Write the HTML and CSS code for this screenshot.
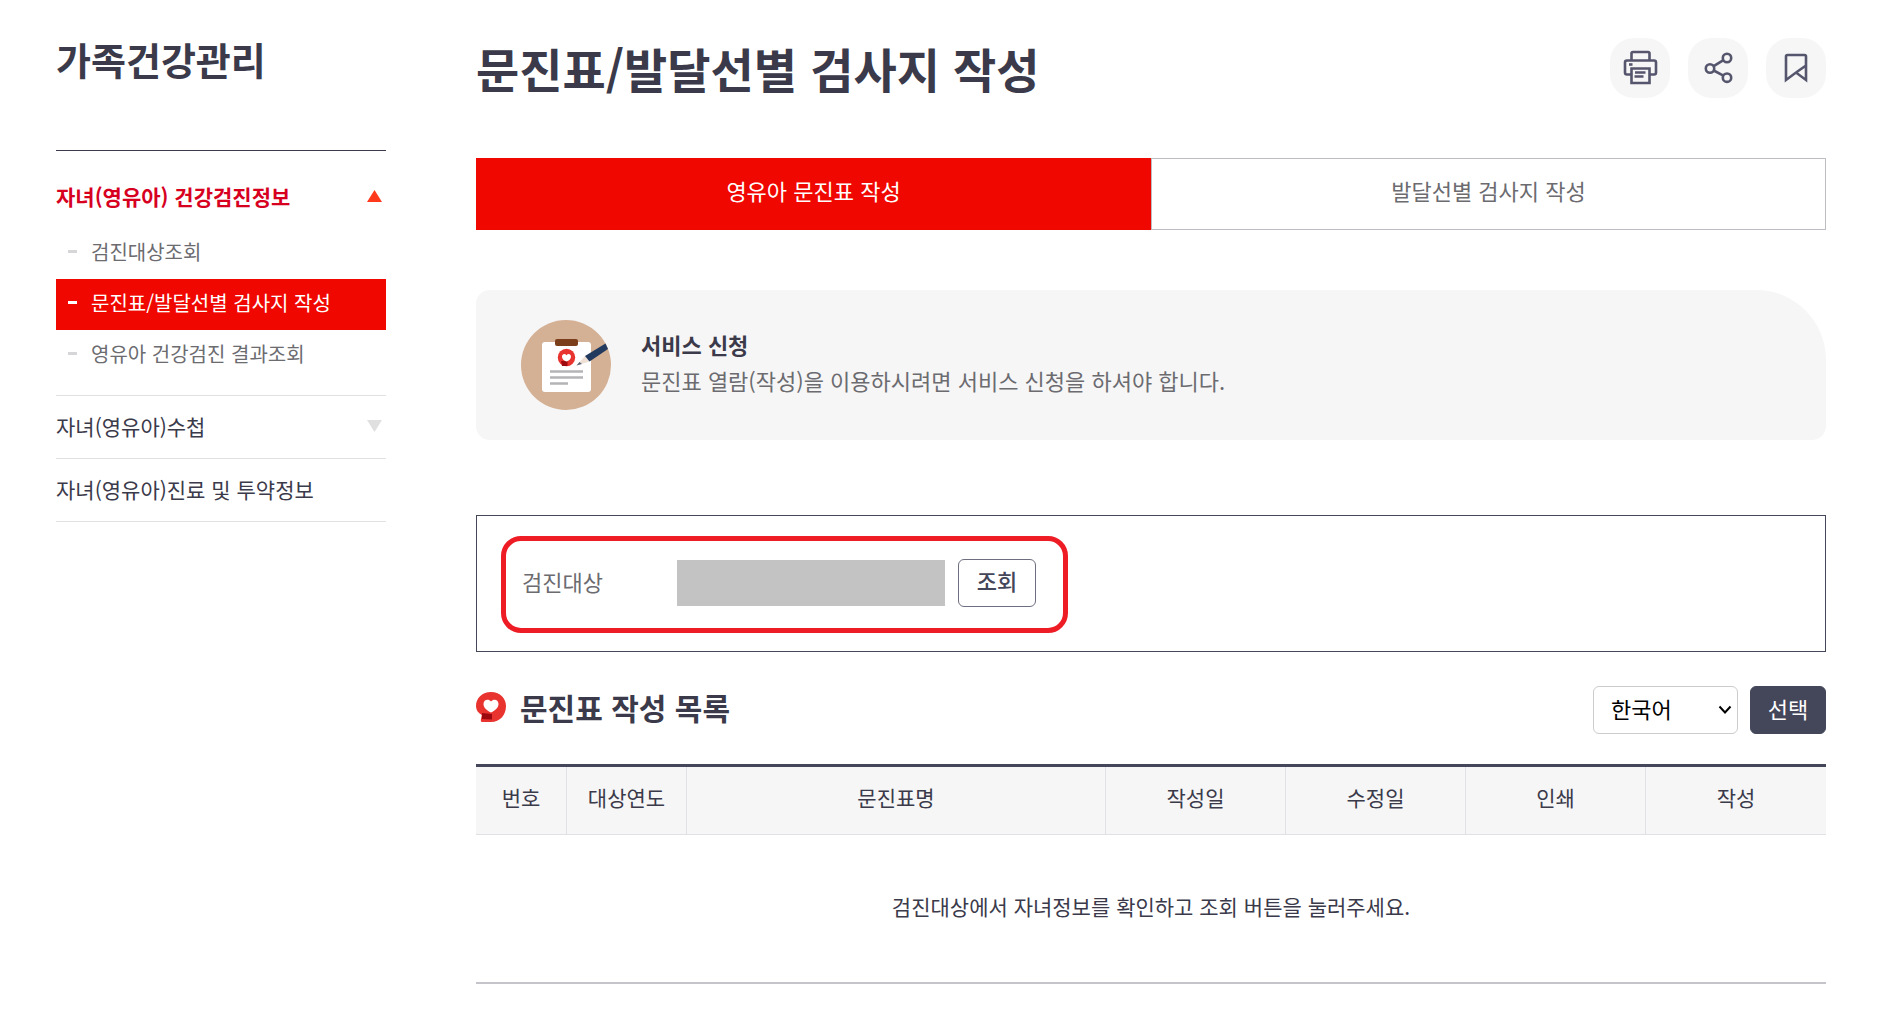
FILE: index.html
```html
<!DOCTYPE html>
<html lang="ko">
<head>
    <meta charset="UTF-8">
    <meta name="viewport" content="width=device-width, initial-scale=1.0">
    <title>문진표/발달선별 검사지 작성</title>
    <link rel="stylesheet" href="styles.css">
</head>
<body>
    <div class="page">
        <aside class="sidebar">
            <h2 class="sidebar-title">가족건강관리</h2>
            <nav>
                <ul class="menu">
                    <li class="menu-item open">
                        <a href="#" class="menu-link">자녀(영유아) 건강검진정보
                            <svg class="arrow" viewBox="0 0 15 12"><path d="M7.5 0 15 12H0z"/></svg>
                        </a>
                        <ul class="submenu">
                            <li><a href="#" class="submenu-link">검진대상조회</a></li>
                            <li><a href="#" class="submenu-link active">문진표/발달선별 검사지 작성</a></li>
                            <li><a href="#" class="submenu-link">영유아 건강검진 결과조회</a></li>
                        </ul>
                    </li>
                    <li class="menu-item">
                        <a href="#" class="menu-link">자녀(영유아)수첩
                            <svg class="arrow" viewBox="0 0 15 12"><path d="M0 0h15L7.5 12z"/></svg>
                        </a>
                    </li>
                    <li class="menu-item">
                        <a href="#" class="menu-link">자녀(영유아)진료 및 투약정보</a>
                    </li>
                </ul>
            </nav>
        </aside>

        <main>
            <header class="page-header">
                <h1>문진표/발달선별 검사지 작성</h1>
                <div class="tools">
                    <button type="button" class="tool-btn" aria-label="인쇄">
                        <svg viewBox="0 0 60 60">
                            <path d="M21.5 22v-6.500q0-1.500 1.500-1.500h15q1.500 0 1.500 1.500V22"/>
                            <path d="M21 36.500h-4q-2 0-2-2V24.500q0-2 2-2h27q2 0 2 2v10q0 2-2 2h-4"/>
                            <path d="M19 26.500h3.500"/>
                            <path d="M21.500 30.500h18v14.500h-18zM25 34.500h10.500M24.500 38.500h9"/>
                        </svg>
                    </button>
                    <button type="button" class="tool-btn" aria-label="공유">
                        <svg viewBox="0 0 60 60">
                            <circle cx="39" cy="20" r="4.200"/>
                            <circle cx="22" cy="30.500" r="4.200"/>
                            <circle cx="39" cy="39.700" r="4.200"/>
                            <path d="M25.700 28.200l9.700-6M25.700 32.500l9.700 5.200"/>
                        </svg>
                    </button>
                    <button type="button" class="tool-btn" aria-label="즐겨찾기">
                        <svg viewBox="0 0 60 60">
                            <path d="M20 42V18.500q0-1.500 1.500-1.500h17q1.500 0 1.500 1.500V42l-10-7.500zM30 34.500l10-7"/>
                        </svg>
                    </button>
                </div>
            </header>

            <div class="tabs">
                <a href="#" class="tab active">영유아 문진표 작성</a>
                <a href="#" class="tab">발달선별 검사지 작성</a>
            </div>

            <section class="notice">
                <svg class="notice-icon" viewBox="0 0 90 90">
                    <circle cx="45" cy="45" r="45" fill="#d4b095"/>
                    <rect x="21" y="22" width="49" height="50" rx="3" fill="#fff"/>
                    <rect x="34" y="19" width="23" height="7" rx="2" fill="#7a3f1a"/>
                    <circle cx="45.500" cy="37.500" r="8.700" fill="#e8332f"/>
                    <path d="M40 41h6.500v5H41z" fill="#9c0a10"/>
                    <path d="M45.500 41.500c-2.500-.8-4.500-2.500-4.500-4.800 0-2.800 3-3.400 4.500-1.400 1.500-2 4.500-1.400 4.500 1.400 0 2.300-2 4-4.500 4.800z" fill="#fff"/>
                    <path d="M29 51.500h33M29 57.500h33M29 63.500h18" stroke="#b4b4b6" stroke-width="2.500"/>
                    <path d="M64 36l4.500 5.500-13 4z" fill="#efe0d6"/>
                    <path d="M58.500 42l2.500 2-5.500 1.500z" fill="#5a6478"/>
                    <path d="M64 36l20.500-12.500 2.500 5.500L68.500 41.500z" fill="#223a5e"/>
                </svg>
                <div>
                    <h3>서비스 신청</h3>
                    <p>문진표 열람(작성)을 이용하시려면 서비스 신청을 하셔야 합니다.</p>
                </div>
            </section>

            <form class="search-box">
                <div class="search-group">
                    <label for="target">검진대상</label>
                    <input type="text" id="target" class="target" readonly>
                    <button type="button" class="btn-search">조회</button>
                </div>
            </form>

            <div class="list-header">
                <h2>
                    <svg class="mark" viewBox="0 0 30 30">
                        <path d="M15 0c8.500 0 15 6 15 14 0 9-6 16-15 16H6q-1.500 0-1.200-2l1-5C2 21 0 18 0 14 0 6 6.500 0 15 0z" fill="#e8332f"/>
                        <path d="M6 21l10 1v5.500l-10-.5z" fill="#9c0a10"/>
                        <path d="M15 20.500c-4.500-2-7.500-5-7.500-8.500 0-4.500 5-5.500 7.500-2.500 2.500-3 7.500-2 7.500 2.500 0 3.500-3 6.500-7.500 8.500z" fill="#fff"/>
                    </svg>
                    문진표 작성 목록
                </h2>
                <div class="list-actions">
                    <div class="select-wrap">
                        <select aria-label="언어">
                            <option>한국어</option>
                        </select>
                        <svg class="chevron" viewBox="0 0 14 10"><path d="M1.500 1.500L7 7.500l5.500-6"/></svg>
                    </div>
                    <button type="button" class="btn-select">선택</button>
                </div>
            </div>

            <table class="list">
                <colgroup>
                    <col class="col-no">
                    <col class="col-year">
                    <col>
                    <col class="col-etc">
                    <col class="col-etc">
                    <col class="col-etc">
                    <col class="col-etc">
                </colgroup>
                <thead>
                    <tr>
                        <th>번호</th>
                        <th>대상연도</th>
                        <th>문진표명</th>
                        <th>작성일</th>
                        <th>수정일</th>
                        <th>인쇄</th>
                        <th>작성</th>
                    </tr>
                </thead>
                <tbody>
                    <tr>
                        <td colspan="7">검진대상에서 자녀정보를 확인하고 조회 버튼을 눌러주세요.</td>
                    </tr>
                </tbody>
            </table>
        </main>
    </div>
</body>
</html>
```
FILE: styles.css
```css
/* General Styles */
* {
    box-sizing: border-box;
}

body {
    margin: 0;
    font-family: "Noto Sans CJK KR", sans-serif;
    font-size: 22px;
    color: #3b3a4a;
    background-color: #fff;
}

h1, h2, h3, p, ul {
    margin: 0;
    padding: 0;
}

ul {
    list-style: none;
}

a {
    color: inherit;
    text-decoration: none;
}

button, input, select {
    font: inherit;
}

.page {
    display: grid;
    grid-template-columns: 330px 1fr;
    gap: 90px;
    padding: 24px 62px 24px 56px;
}

/* Sidebar */
.sidebar-title {
    height: 126px;
    font-size: 38px;
    line-height: 70px;
}

.menu {
    border-top: 1px solid #3b3a4a;
    font-size: 21px;
}

.menu-item {
    border-bottom: 1px solid #e1e1e1;
}

.menu-item.open {
    padding: 15px 0 14px;
}

.menu-link {
    display: flex;
    align-items: center;
    justify-content: space-between;
    height: 62px;
    padding: 0 4px 2px 0;
}

.open .menu-link {
    color: #d7001f;
    font-weight: bold;
}

.arrow {
    width: 15px;
    height: 12px;
    fill: #e0e0e0;
}

.open .arrow {
    fill: #ff3a1c;
}

.submenu-link {
    display: flex;
    align-items: center;
    gap: 14px;
    height: 51px;
    padding: 0 0 5px 12px;
    font-size: 20px;
    color: #6b6b70;
}

.submenu-link::before {
    content: "";
    width: 9px;
    height: 3px;
    background-color: #d6d6d8;
}

.submenu-link.active {
    background-color: #f00700;
    color: #fff;
}

.submenu-link.active::before {
    background-color: #fff;
}

/* Page header */
.page-header {
    display: flex;
    justify-content: space-between;
    height: 134px;
}

h1 {
    font-size: 47px;
    line-height: 88px;
}

.tools {
    display: flex;
    gap: 18px;
    padding-top: 14px;
}

.tool-btn {
    width: 60px;
    height: 60px;
    padding: 0;
    border: none;
    border-radius: 24px;
    background-color: #f6f6f6;
    cursor: pointer;
}

.tool-btn svg {
    display: block;
    fill: none;
    stroke: #55566d;
    stroke-width: 2.6;
}

/* Tabs */
.tabs {
    display: flex;
    margin-bottom: 60px;
}

.tab {
    flex: 1;
    height: 72px;
    border: 1px solid #bcbcc2;
    line-height: 62px;
    text-align: center;
    color: #6b6b70;
}

.tab.active {
    border-color: #f00700;
    background-color: #f00700;
    color: #fff;
}

/* Notice */
.notice {
    display: flex;
    align-items: center;
    gap: 30px;
    height: 150px;
    margin-bottom: 75px;
    padding: 0 45px;
    border-radius: 14px 70px 14px 14px;
    background-color: #f6f6f6;
    line-height: 36px;
    color: #6b6b70;
}

.notice div {
    padding-bottom: 7px;
}

.notice-icon {
    flex: none;
    width: 90px;
    height: 90px;
}

.notice h3 {
    font-size: 22px;
    color: #3b3a4a;
}

/* Search */
.search-box {
    display: flex;
    margin-bottom: 34px;
    padding: 20px 24px 18px;
    border: 1px solid #44465a;
}

.search-group {
    display: flex;
    align-items: center;
    height: 97px;
    padding: 0 27px 4px 16px;
    border: 5px solid #ee1c25;
    border-radius: 20px;
}

.search-group label {
    width: 155px;
    padding-bottom: 4px;
    color: #6b6b70;
}

.target {
    width: 268px;
    height: 46px;
    margin-right: 13px;
    border: none;
    background-color: #c3c3c3;
}

.btn-search, .btn-select {
    width: 78px;
    height: 48px;
    padding: 0 0 5px;
    border: 1px solid #6d6e80;
    border-radius: 6px;
    background-color: #fff;
    color: #44465a;
    font-weight: 500;
    cursor: pointer;
}

.btn-select {
    width: 76px;
    border-color: #44465a;
    background-color: #44465a;
    color: #fff;
    font-weight: 400;
}

/* List */
.list-header {
    display: flex;
    justify-content: space-between;
    height: 78px;
}

.list-header h2 {
    display: flex;
    align-items: center;
    gap: 14px;
    height: 42px;
    font-size: 30px;
}

.mark {
    width: 30px;
    height: 30px;
}

.list-actions {
    display: flex;
    align-items: flex-start;
    gap: 12px;
}

.select-wrap {
    display: grid;
    align-items: center;
}

.select-wrap select, .chevron {
    grid-area: 1 / 1;
}

.chevron {
    justify-self: end;
    width: 14px;
    height: 10px;
    margin-right: 6px;
    fill: none;
    stroke: #000;
    stroke-width: 2;
    pointer-events: none;
}

select {
    width: 145px;
    height: 48px;
    padding: 0 0 5px 17px;
    border: 1px solid #ccc;
    border-radius: 6px;
    background-color: #fff;
    color: #000;
    appearance: none;
}

.list {
    width: 100%;
    border-collapse: separate;
    border-spacing: 0;
    border-top: 3px solid #44465a;
    border-bottom: 2px solid #c4c4ca;
    table-layout: fixed;
    font-size: 21px;
    text-align: center;
}

.col-no {
    width: 91px;
}

.col-year {
    width: 120px;
}

.col-etc {
    width: 180px;
}

.list th {
    height: 68px;
    padding: 0 0 7px;
    border-right: 1px solid #e0e0e5;
    border-bottom: 1px solid #e0e0e5;
    background-color: #f6f6f6;
    font-weight: 400;
}

.list th:last-child {
    border-right: none;
}

.list td {
    height: 147px;
    padding: 0 0 6px;
}
```
